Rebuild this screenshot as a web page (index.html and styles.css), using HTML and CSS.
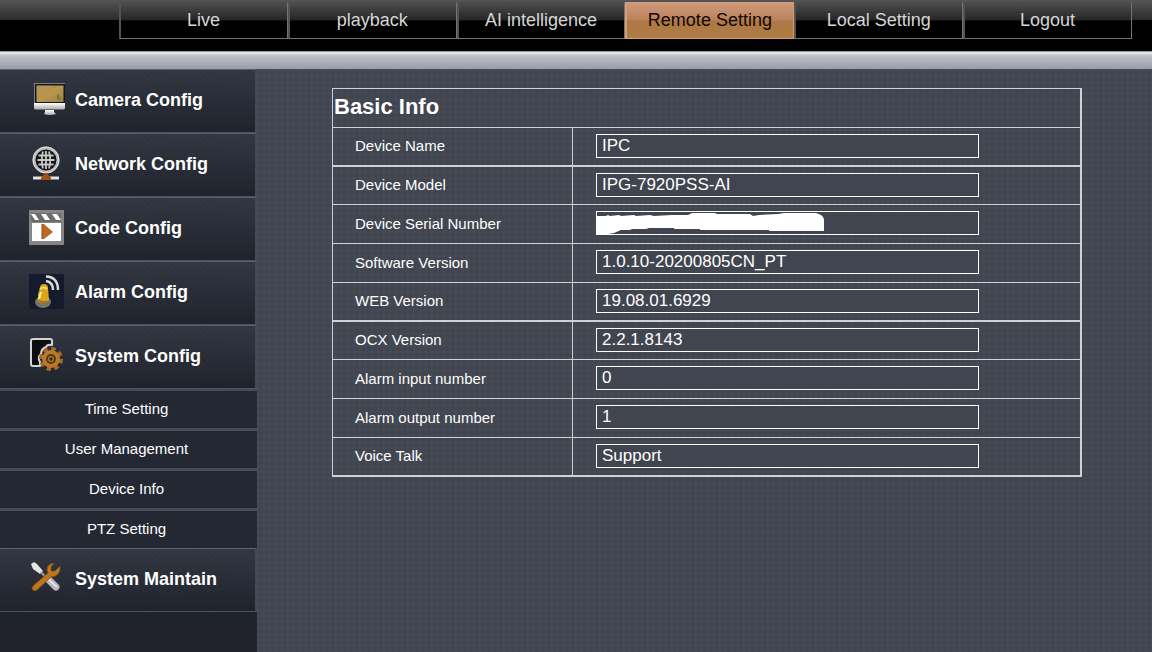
FILE: index.html
```html
<!DOCTYPE html>
<html lang="en">
<head>
<meta charset="utf-8">
<title>Remote Setting</title>
<link rel="stylesheet" href="styles.css">
</head>
<body>
<header class="topbar">
  <nav class="tabs">
    <a class="tab" href="#live">Live</a>
    <a class="tab" href="#playback">playback</a>
    <a class="tab" href="#ai">AI intelligence</a>
    <a class="tab tab-active" href="#remote">Remote Setting</a>
    <a class="tab" href="#local">Local Setting</a>
    <a class="tab" href="#logout">Logout</a>
  </nav>
</header>
<div class="strip"></div>
<div class="layout">
  <nav class="sidebar">
    <a class="group" href="#camera">
      <svg class="icon" viewBox="0 0 36 36" aria-hidden="true">
        <defs>
          <linearGradient id="gold" x1="0" y1="0" x2="1" y2="1"><stop offset="0" stop-color="#a78c4c"/><stop offset=".5" stop-color="#b9964f"/><stop offset="1" stop-color="#96834a"/></linearGradient>
          <linearGradient id="steel" x1="0" y1="0" x2="0" y2="1"><stop offset="0" stop-color="#fff"/><stop offset="1" stop-color="#aaa"/></linearGradient>
        </defs>
        <rect x="5" y="1" width="32" height="20" fill="#777e80"/>
        <rect x="6" y="2" width="30" height="19" fill="#15171a"/>
        <rect x="7.500" y="3.500" width="27" height="16.500" fill="url(#gold)"/>
        <path d="M7.500 14Q20 11 23 3.500H7.500Z" fill="#c49f5d" opacity=".35"/>
        <path d="M28 13l2-1v3l2 1-2 2-2-1" fill="#7c7728"/>
        <path d="M5 21H36V26Q36 27.500 34 27.500H7Q5 27.500 5 26Z" fill="url(#steel)"/>
        <path d="M16 28H25V30L27 32Q21 34 15 32L16 30Z" fill="url(#steel)"/>
      </svg>
      <span>Camera Config</span>
    </a>
    <a class="group" href="#network">
      <svg class="icon" viewBox="0 0 36 36" aria-hidden="true">
        <circle cx="17" cy="14" r="12" fill="#121417" stroke="#bcbcbc" stroke-width="3"/>
        <circle cx="17" cy="14" r="13" fill="none" stroke="#eee" stroke-width=".7"/>
        <g fill="none" stroke="#c8c8c8" stroke-width="1.800"><path d="M14 5.500Q11.500 14 14 22.500M20 5.500Q22.500 14 20 22.500M17 5V23M8.500 14H25.500M9.500 9.500H24.500M9.500 18.500H24.500"/></g>
        <path d="M4 32H30" stroke="#e3e3e3" stroke-width="3"/>
        <path d="M12 32Q13 29 15 29V27H19V29Q21 29 22 32V34H12Z" fill="#9b5411"/>
      </svg>
      <span>Network Config</span>
    </a>
    <a class="group" href="#code">
      <svg class="icon" viewBox="0 0 36 36" aria-hidden="true">
        <rect width="35" height="35" fill="#858585"/>
        <rect x="2" y="3" width="30" height="9" fill="#6c6c6c"/>
        <path d="M2 4H6L10 10H6ZM12 4H17L21 10H16ZM23 4H28L32 10H27Z" fill="#fff"/>
        <rect x="3" y="13" width="29" height="18" fill="#fff"/>
        <path d="M13 14H15L24 22L15 29H13Z" fill="#b76b25"/>
        <path d="M13 14V29" stroke="#8b4d17" stroke-width="1"/>
      </svg>
      <span>Code Config</span>
    </a>
    <a class="group" href="#alarm">
      <svg class="icon" viewBox="0 0 36 36" aria-hidden="true">
        <rect width="35" height="35" fill="#151a2c"/>
        <ellipse cx="14" cy="28" rx="8" ry="6" fill="#77746a"/>
        <path d="M11 14Q11 10 15 10Q19 10 19 14L20 26Q15 32 9 27V20Z" fill="#d9a51d"/>
        <path d="M11 15Q15 12 18 15" fill="none" stroke="#f7de78" stroke-width="2"/>
        <path d="M12 18L10 25" stroke="#fff0ac" stroke-width="2"/>
        <path d="M10 26Q14 30 18 27" fill="none" stroke="#a1690c" stroke-width="1.500"/>
        <path d="M17 7Q24 8 24 16M17 2.500Q29 3 29 16" fill="none" stroke="#d5dddc" stroke-width="2.400"/>
      </svg>
      <span>Alarm Config</span>
    </a>
    <a class="group" href="#system">
      <svg class="icon" viewBox="0 0 36 36" aria-hidden="true">
        <path d="M4 1H21Q23 1 23 3V7Q18 6 17 9Q12 11 12 16Q8 19 11 24V28H4Q2 28 2 26V3Q2 1 4 1Z" fill="#0c0d0f" stroke="#d4d4d4" stroke-width="2" stroke-linejoin="round"/>
        <circle cx="22" cy="21" r="10" fill="none" stroke="#a56d24" stroke-width="4" stroke-dasharray="4.200 3.654"/>
        <circle cx="22" cy="21" r="6.500" fill="none" stroke="#c07725" stroke-width="5"/>
        <circle cx="22" cy="21" r="4" fill="#c07725" stroke="#42401e" stroke-width="2"/>
        <circle cx="22" cy="21" r="1.800" fill="#332c1e"/>
      </svg>
      <span>System Config</span>
    </a>
    <div class="submenu">
      <a class="item" href="#time">Time Setting</a>
      <a class="item" href="#users">User Management</a>
      <a class="item" href="#device">Device Info</a>
      <a class="item" href="#ptz">PTZ Setting</a>
    </div>
    <a class="group" href="#maintain">
      <svg class="icon" viewBox="0 0 36 36" aria-hidden="true">
        <path d="M2 3L5 1L8 3L14 10L11 13L4 8Z" fill="#e6e6e6"/>
        <path d="M12 11L20 20" stroke="#999" stroke-width="2"/>
        <path d="M20 19L27 26" stroke="#b9babd" stroke-width="7" stroke-linecap="round"/>
        <path d="M19 18L28 26" stroke="#eee" stroke-width="1.500"/>
        <path d="M25 2Q18 3 18 9L19 12L4 25Q2 28 4 29Q7 31 9 28L22 16Q29 16 31 9V5L26 10L22 10L22 6Z" fill="#c0741b" stroke="#71551d" stroke-width=".8"/>
      </svg>
      <span>System Maintain</span>
    </a>
  </nav>
  <main class="content">
    <table class="info">
      <colgroup><col class="col-label"><col></colgroup>
      <thead>
        <tr><th class="title" colspan="2">Basic Info</th></tr>
      </thead>
      <tbody>
        <tr class="thick"><th><label for="name">Device Name</label></th><td><input id="name" type="text" value="IPC" readonly></td></tr>
        <tr><th><label for="model">Device Model</label></th><td><input id="model" type="text" value="IPG-7920PSS-AI" readonly></td></tr>
        <tr><th><label for="serial">Device Serial Number</label></th><td><div class="field">
          <input id="serial" type="text" readonly>
          <svg class="redaction" viewBox="0 0 229 24" aria-hidden="true"><path d="M0 5H10L12 4 14 5 23 4 25 5 38 4 40 5 54 4 58 5 76 4 92 4 96 2H119L121 3 154 3 157 5 163 4 182 3 188 2H220Q228 4 228 9V20H173V19H104V18H78V17H53L50 18H36L34 19H25L18 22 12 23H0Z"/></svg>
        </div></td></tr>
        <tr><th><label for="software">Software Version</label></th><td><input id="software" type="text" value="1.0.10-20200805CN_PT" readonly></td></tr>
        <tr class="thick"><th><label for="web">WEB Version</label></th><td><input id="web" type="text" value="19.08.01.6929" readonly></td></tr>
        <tr><th><label for="ocx">OCX Version</label></th><td><input id="ocx" type="text" value="2.2.1.8143" readonly></td></tr>
        <tr><th><label for="alarm-in">Alarm input number</label></th><td><input id="alarm-in" type="text" value="0" readonly></td></tr>
        <tr><th><label for="alarm-out">Alarm output number</label></th><td><input id="alarm-out" type="text" value="1" readonly></td></tr>
        <tr class="thick"><th><label for="voice">Voice Talk</label></th><td><input id="voice" type="text" value="Support" readonly></td></tr>
      </tbody>
    </table>
  </main>
</div>
</body>
</html>
```
FILE: styles.css
```css
* { box-sizing: border-box; }

body {
  margin: 0;
  min-height: 100vh;
  display: flex;
  flex-direction: column;
  font-family: "Liberation Sans", Arial, sans-serif;
  color: #fff;
  background: #41454f;
}

a { color: inherit; text-decoration: none; }

.topbar {
  height: 51px;
  padding: 2px 20px 0 119px;
  background: linear-gradient(#555 0, #2c2c2c 20px, #000 20px);
}

.tabs {
  display: grid;
  grid-template-columns: repeat(6, 1fr);
}

.tab {
  height: 37px;
  line-height: 34px;
  padding-right: 1px;
  text-align: center;
  font-size: 18px;
  color: #d6d6d6;
  border: 1px solid #77736f;
  border-top-color: #4c4c4c;
  border-left: 2px solid #55524f;
  background: linear-gradient(#4c4c4c 0, #262626 17px, #000 18px);
}

.tab-active {
  color: #100804;
  border-color: #d0a078;
  background: linear-gradient(#cf9a7b 0, #bb805a 17px, #ad7843 18px, #b07c46);
}

.strip {
  height: 18px;
  border-top: 1px solid #999;
  background: linear-gradient(#e8e8e8 0, #dedede 2px, #bfc2c9 3px, #9a9da8);
}

.layout {
  flex: 1;
  display: grid;
  grid-template-columns: 257px 1fr;
}

.sidebar { background: #20232b; }

.group {
  display: flex;
  align-items: center;
  gap: 10px;
  height: 64px;
  padding: 0 0 2px 29px;
  font-size: 18px;
  font-weight: bold;
  border-top: 1px solid #526078;
  border-right: 2px solid #3f4a5b;
  border-bottom: 1px solid #48536a;
  background:
    repeating-linear-gradient(45deg, #0000 0 3px, #0000000c 3px 5px),
    linear-gradient(#333843, #1f242d);
}

.icon {
  flex: none;
  width: 36px;
  height: 36px;
}

.submenu {
  display: grid;
  gap: 3px;
  padding-top: 2px;
  background: #454c58;
}

.item {
  height: 37px;
  line-height: 36px;
  padding-right: 4px;
  text-align: center;
  font-size: 15px;
  background: #242833;
}

.content {
  padding: 19px 70px 19px 75px;
  background:
    repeating-linear-gradient(90deg, #ffffff04 0 2px, #0000 2px 6px),
    repeating-linear-gradient(#ffffff04 0 2px, #0000 2px 6px),
    #40454f;
}

.info {
  width: 100%;
  table-layout: fixed;
  border-collapse: separate;
  border-spacing: 0;
  border: 1px solid #d0d0d6;
  border-right-width: 2px;
  border-bottom: 0;
}

.col-label { width: 240px; }

.info th,
.info td {
  height: 39px;
  padding: 0 0 2px;
  border-bottom: 1px solid #d0d0d6;
}

.info tbody th {
  padding-left: 22px;
  text-align: left;
  font-size: 15px;
  font-weight: normal;
  border-right: 1px solid #d0d0d6;
}

.info .title {
  padding-left: 1px;
  text-align: left;
  font-size: 22px;
}

.info td { padding-left: 23px; }

.info .thick th,
.info .thick td { border-bottom-width: 2px; }

.info .thick + tr th,
.info .thick + tr td { height: 38px; }

.info input {
  display: block;
  width: 383px;
  max-width: 100%;
  height: 24px;
  padding: 0 5px;
  font: 17px "Liberation Sans", Arial, sans-serif;
  color: #fff;
  border: 1px solid #fff;
  border-radius: 0;
  background: #41454f;
}

.field { position: relative; }

.redaction {
  position: absolute;
  top: 0;
  left: 0;
  width: 229px;
  height: 24px;
  fill: #fff;
}
```
